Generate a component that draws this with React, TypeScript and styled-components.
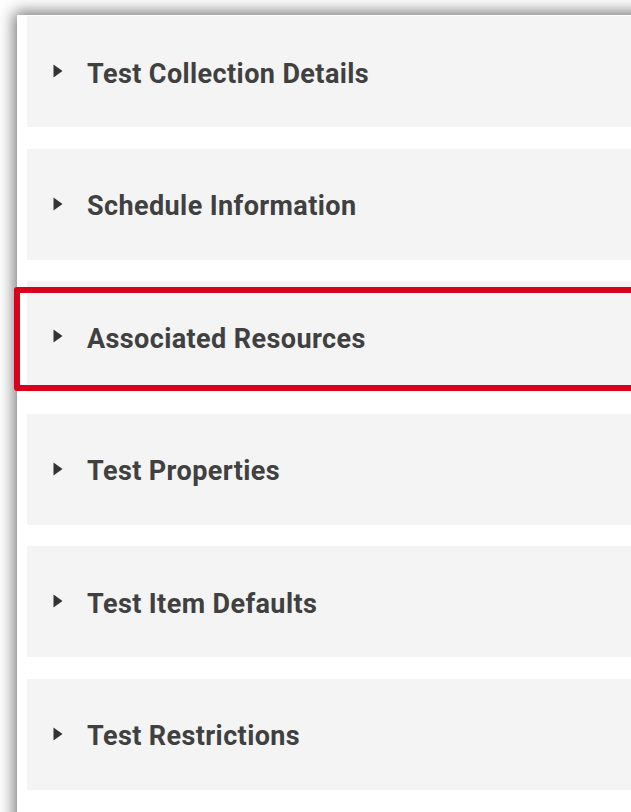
import styled, { createGlobalStyle } from 'styled-components';

const sections = [
  'Test Collection Details',
  'Schedule Information',
  'Associated Resources',
  'Test Properties',
  'Test Item Defaults',
  'Test Restrictions',
];

const highlighted = 'Associated Resources';

function Caret() {
  return (
    <CaretIcon viewBox="0 0 10 14" aria-hidden="true">
      <polygon points="0.5,0.5 9.5,7 0.5,13.5" />
    </CaretIcon>
  );
}

function SectionRow({ title, active }: { title: string; active: boolean }) {
  return (
    <Row>
      <Caret />
      <RowTitle>{title}</RowTitle>
      {active && <Highlight />}
    </Row>
  );
}

function App() {
  return (
    <>
      <GlobalStyle />
      <Page>
        <Frame>
          <SectionList>
            {sections.map((title) => (
              <SectionRow key={title} title={title} active={title === highlighted} />
            ))}
          </SectionList>
        </Frame>
      </Page>
    </>
  );
}

const GlobalStyle = createGlobalStyle`
  html, body {
    margin: 0;
    padding: 0;
    background: #ffffff;
    overflow: hidden;
  }
`;

const Page = styled.div`
  width: 631px;
  height: 812px;
  padding: 15px 0 0 17px;
  box-sizing: border-box;
  overflow: hidden;
  background: #ffffff;
`;

const Frame = styled.div`
  width: 640px;
  min-height: 820px;
  padding: 1px 0 0 10px;
  box-sizing: border-box;

  background: #ffffff;
  box-shadow: -1px -1px 15px 2px rgba(0, 0, 0, 0.55);
`;

const SectionList = styled.ul`
  display: flex;
  flex-direction: column;
  gap: 21.6px;

  margin: 0;
  padding: 0;
  list-style: none;
`;

const Row = styled.li`
  position: relative;
  display: flex;
  align-items: center;
  gap: 24px;

  height: 111px;
  padding-left: 26px;
  box-sizing: border-box;

  background: #f4f4f4;
`;

const CaretIcon = styled.svg`
  width: 10px;
  height: 14px;
  margin-top: -1px;
  fill: #333333;
`;

const RowTitle = styled.span`
  margin-top: 4px;

  font-family: Roboto, 'Liberation Sans', sans-serif;
  font-size: 27px;
  font-weight: 700;
  color: #404040;
  letter-spacing: 0.4px;
`;

const Highlight = styled.div`
  position: absolute;
  top: 6px;
  bottom: 1px;
  left: -13px;
  right: -20px;

  border: 6px solid #d9001b;
  border-radius: 3px;
  pointer-events: none;
`;

export default App;
